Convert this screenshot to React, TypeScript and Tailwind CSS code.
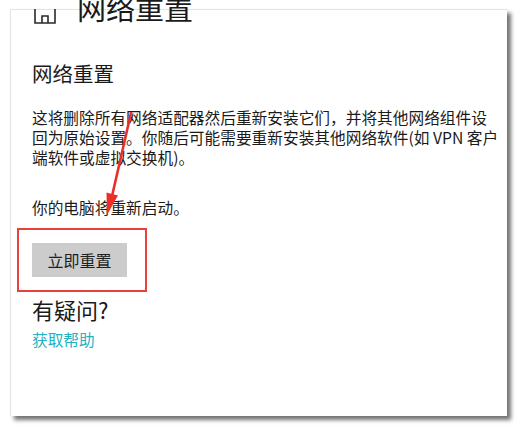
import React from "react";

export default function App() {
  return (
    <div className="relative w-[518px] h-[427px] overflow-hidden bg-white font-['Noto_Sans_CJK_SC','Noto_Sans',sans-serif] text-[#1a1a1a]">
      <div className="ml-[10px] mt-[9px] w-[497px] h-[407px] bg-white border-l border-t border-[#e3e3e3] shadow-[4px_4px_4px_rgba(0,0,0,0.55)] pl-[21px] flex flex-col">
        <div className="-mt-[21px] flex h-[36px] items-center">
          <svg width="24" height="36" viewBox="0 0 24 36" className="ml-[1px] shrink-0" fill="none" stroke="#2a2a2a" strokeWidth="1.6">
            <path d="M2 20 V34 H22 V20" />
            <path d="M9 34 V27 H15 V34" />
          </svg>
          <span className="ml-[20px] text-[29px] leading-[36px] whitespace-nowrap">网络重置</span>
        </div>

        <div className="mt-[34px] text-[20.5px] leading-[28px] whitespace-nowrap">网络重置</div>

        <div className="mt-[21px] text-[15.7px] leading-[20px] whitespace-nowrap">
          这将删除所有网络适配器然后重新安装它们，并将其他网络组件设
          <br />
          回为原始设置。你随后可能需要重新安装其他网络软件(如 VPN 客户
          <br />
          端软件或虚拟交换机)。
        </div>

        <div className="mt-[30px] text-[15.7px] leading-[20px] whitespace-nowrap">你的电脑将重新启动。</div>

        <div className="mt-[10px] -ml-[15px] w-[130px] h-[64px] border-2 border-[#e8403d] pl-[13px] pt-[13px]">
          <button className="w-[95px] h-[34px] bg-[#cccccc] text-[16px] leading-[34px] text-[#1f1f1f] text-center">
            立即重置
          </button>
        </div>

        <div className="mt-[2px] text-[22px] leading-[30px] whitespace-nowrap">有疑问?</div>

        <div className="mt-[6px] text-[15.7px] leading-[20px] text-[#22b2c2] whitespace-nowrap">获取帮助</div>
      </div>

      <svg className="absolute left-0 top-0 pointer-events-none" width="518" height="427" viewBox="0 0 518 427">
        <line x1="131" y1="113" x2="112.5" y2="194" stroke="#ea2f2b" strokeWidth="2.6" strokeLinecap="round" />
        <polygon points="107,215 118,195.5 106.5,192.5" fill="#ea2f2b" />
      </svg>
    </div>
  );
}
